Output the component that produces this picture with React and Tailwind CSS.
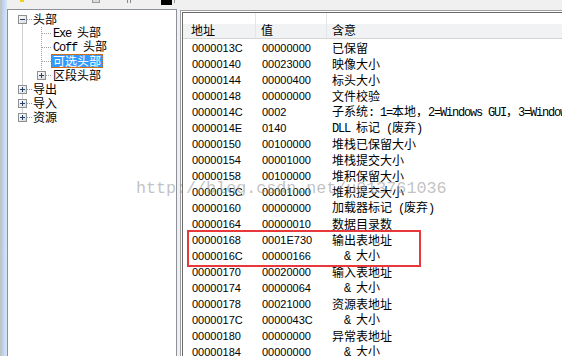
import React from 'react'

const rows = [
  ['0000013C', '00000000', '已保留'],
  ['00000140', '00023000', '映像大小'],
  ['00000144', '00000400', '标头大小'],
  ['00000148', '00000000', '文件校验'],
  ['0000014C', '0002', '子系统: 1=本地，2=Windows GUI，3=Windows CUI'],
  ['0000014E', '0140', 'DLL 标记 (废弃)'],
  ['00000150', '00100000', '堆栈已保留大小'],
  ['00000154', '00001000', '堆栈提交大小'],
  ['00000158', '00100000', '堆积保留大小'],
  ['0000015C', '00001000', '堆积提交大小'],
  ['00000160', '00000000', '加载器标记 (废弃)'],
  ['00000164', '00000010', '数据目录数'],
  ['00000168', '0001E730', '输出表地址'],
  ['0000016C', '00000166', '  & 大小'],
  ['00000170', '00020000', '输入表地址'],
  ['00000174', '00000064', '  & 大小'],
  ['00000178', '00021000', '资源表地址'],
  ['0000017C', '0000043C', '  & 大小'],
  ['00000180', '00000000', '异常表地址'],
  ['00000184', '00000000', '  & 大小'],
]

// ascii runs get the narrow mono face, the rest falls to the CJK font
function Mix({ text }) {
  return text
    .split(/([\x20-\x7e]+)/)
    .filter(Boolean)
    .map((s, i) =>
      /^[\x20-\x7e]+$/.test(s) ? (
        <span key={i} className="font-['Liberation_Mono',monospace] text-[12px] tracking-[-1.2px]">
          {s}
        </span>
      ) : (
        <span key={i}>{s}</span>
      )
    )
}

function Box({ open }) {
  return (
    <svg width="9" height="9" viewBox="0 0 9 9" className="shrink-0">
      <defs>
        <linearGradient id={open ? 'bx-o' : 'bx-c'} x1="0" y1="0" x2="1" y2="1">
          <stop offset="0" stopColor="#ffffff" />
          <stop offset="1" stopColor="#d8d8d8" />
        </linearGradient>
      </defs>
      <rect x="0.5" y="0.5" width="8" height="8" fill={`url(#${open ? 'bx-o' : 'bx-c'})`} stroke="#8e8f8f" />
      <line x1="2" y1="4.5" x2="7" y2="4.5" stroke="#23406f" />
      {!open && <line x1="4.5" y1="2" x2="4.5" y2="7" stroke="#23406f" />}
    </svg>
  )
}

function Label({ children, selected }) {
  return (
    <span
      className={
        selected
          ? 'border border-dotted border-[#c8650e] bg-[#3399ff] px-[1px] leading-[12px] text-white'
          : 'border border-transparent px-[1px] leading-[12px] text-black'
      }
    >
      {children}
    </span>
  )
}

function TreeLines() {
  const c = (i) => 9.5 + 14 * i
  const dot = { stroke: '#a0a0a0', strokeDasharray: '1 1' }
  return (
    <svg className="absolute left-0 top-0" width="168" height="140">
      <line x1="14.5" y1={c(0)} x2="14.5" y2={c(7)} {...dot} />
      {[0, 5, 6, 7].map((i) => (
        <line key={i} x1="19" y1={c(i)} x2="25" y2={c(i)} {...dot} />
      ))}
      <line x1="33.5" y1="17" x2="33.5" y2={c(4)} {...dot} />
      {[1, 2, 3].map((i) => (
        <line key={i} x1="34" y1={c(i)} x2="44" y2={c(i)} {...dot} />
      ))}
      <line x1="38" y1={c(4)} x2="44" y2={c(4)} {...dot} />
    </svg>
  )
}

function Tree() {
  return (
    <div className="relative w-[170px] shrink-0 border border-b-0 border-[#8b9099] bg-white pt-[2px] font-['Noto_Sans_CJK_SC',sans-serif] text-[12px]">
      <TreeLines />
      <div className="relative flex h-[14px] items-center pl-[10px]">
        <Box open />
        <span className="ml-[4px]"><Label>头部</Label></span>
      </div>
      <div className="relative flex h-[14px] items-center pl-[43px]">
        <Label><Mix text="Exe 头部" /></Label>
      </div>
      <div className="relative flex h-[14px] items-center pl-[43px]">
        <Label><Mix text="Coff 头部" /></Label>
      </div>
      <div className="relative flex h-[14px] items-center pl-[43px]">
        <Label selected>可选头部</Label>
      </div>
      <div className="relative flex h-[14px] items-center pl-[29px]">
        <Box />
        <span className="ml-[5px]"><Label>区段头部</Label></span>
      </div>
      {['导出', '导入', '资源'].map((t) => (
        <div key={t} className="relative flex h-[14px] items-center pl-[10px]">
          <Box />
          <span className="ml-[4px]"><Label>{t}</Label></span>
        </div>
      ))}
    </div>
  )
}

function Table() {
  return (
    <div className="mt-[1px] flex min-w-0 flex-1 flex-col border-l border-t border-[#a0a0a0] bg-white pl-[1px] pt-[1px]">
      <div className="flex min-w-0 flex-1 flex-col border-l border-t border-[#6b6b6b] bg-white">
        <div className="grid h-[26px] grid-cols-[73px_71px_1fr] border-b border-[#d5d5d5] bg-[linear-gradient(to_bottom,#ffffff_0%,#ffffff_45%,#f1f2f4_45%,#f1f2f4_100%)] font-['Noto_Sans_CJK_SC',sans-serif] text-[12px] text-black">
          <div className="border-r border-[#e2e5ea] pl-[8px] pt-[10px] leading-[14px]">地址</div>
          <div className="border-r border-[#e2e5ea] pl-[5px] pt-[10px] leading-[14px]">值</div>
          <div className="pl-[5px] pt-[10px] leading-[14px]">含意</div>
        </div>
        <div className="pt-[1px]">
          {rows.map(([a, v, m]) => (
            <div key={a} className="grid h-[16px] grid-cols-[73px_71px_1fr] items-center leading-[16px] text-black">
              <div className="pl-[9px] font-['Liberation_Sans',sans-serif] text-[11px]">{a}</div>
              <div className="pl-[6px] font-['Liberation_Sans',sans-serif] text-[11px]">{v}</div>
              <div className="overflow-hidden whitespace-pre pl-[5px] font-['Noto_Sans_CJK_SC',sans-serif] text-[12px]">
                <Mix text={m} />
              </div>
            </div>
          ))}
        </div>
      </div>
    </div>
  )
}

export default function App() {
  return (
    <div className="relative flex h-[356px] w-[562px] overflow-hidden bg-[#f0f0f0]">
      <div className="w-[7px] shrink-0 border-l-2 border-[#c4c4c4] bg-gradient-to-r from-[#b7d0ec] to-[#d9e6f4]" />
      <div className="flex min-w-0 flex-1 flex-col">
        <div className="flex h-[9px] shrink-0 items-start">
          <span className="ml-[13px] h-[2px] w-[4px] bg-[#f2cf1a]" />
          <span className="ml-[68px] h-[3px] w-[8px] border border-t-0 border-[#9a9a9a] bg-[#dcdcdc]" />
          <span className="ml-[27px] h-[3px] w-[1px] bg-[#8a8a8a]" />
          <span className="ml-[2px] h-[3px] w-[1px] bg-[#8a8a8a]" />
          <span className="ml-[30px] h-[5px] w-[11px] bg-black" />
          <span className="ml-[2px] h-[3px] w-[1px] bg-[#9a9a9a]" />
        </div>
        <div className="flex min-h-0 flex-1">
          <Tree />
          <div className="w-[3px] shrink-0" />
          <Table />
        </div>
      </div>

      <div className="pointer-events-none absolute left-[187px] top-[230px] h-[37px] w-[234px] border-2 border-[#e8383b]" />
      <div className="pointer-events-none absolute left-[136px] top-[180px] whitespace-pre font-['Liberation_Mono',monospace] text-[16.7px] leading-[17px] text-[#999999]/60">
        http://blog.csdn.net/u013761036
      </div>
    </div>
  )
}
